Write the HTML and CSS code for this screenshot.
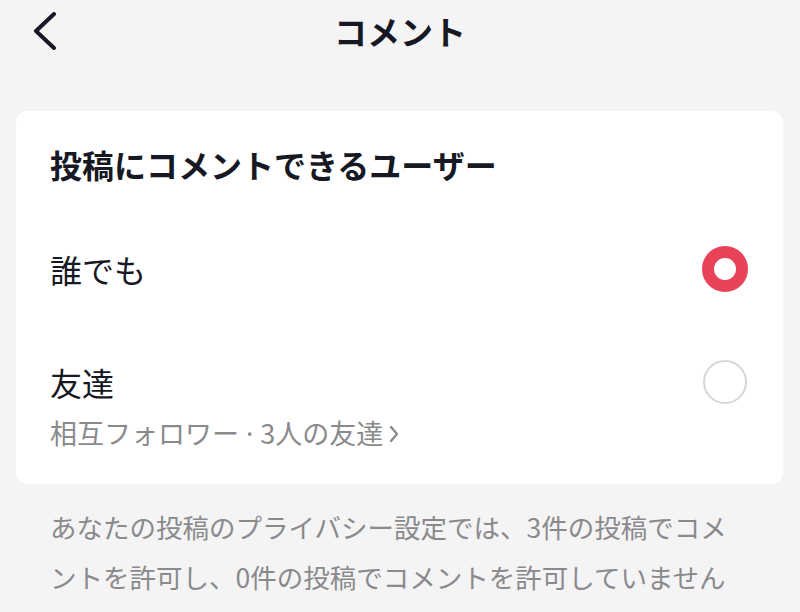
FILE: index.html
```html
<!DOCTYPE html>
<html lang="ja">
  <head>
    <meta charset="UTF-8" />
    <meta name="viewport" content="width=device-width, initial-scale=1.0" />
    <title>コメント</title>
    <link rel="stylesheet" href="styles.css">
  </head>
  <body>
    <header class="top-bar">
      <a href="#" class="back-button" aria-label="戻る">
        <svg width="24" height="38" viewBox="0 0 24 38">
          <polyline points="21,2 3,19 21,36" fill="none" stroke="#161823" stroke-width="4" stroke-linecap="round" stroke-linejoin="round" />
        </svg>
      </a>
      <h1 class="page-title">コメント</h1>
      <span></span>
    </header>

    <section class="card">
      <h2 class="card-title">投稿にコメントできるユーザー</h2>

      <!-- 선택 항목 -->
      <label class="option option-first">
        <span class="option-label">誰でも</span>
        <span class="radio radio-on"></span>
      </label>

      <label class="option option-second">
        <span class="option-label">友達</span>
        <span class="radio"></span>
      </label>
      <a href="#" class="option-sub">
        <span>相互フォロワー<span class="dot"> · </span>3人の友達</span>
        <svg width="12" height="20" viewBox="0 0 12 20">
          <polyline points="3,3 9,10 3,17" fill="none" stroke="#8a8a8d" stroke-width="2.4" stroke-linecap="round" stroke-linejoin="round" />
        </svg>
      </a>
    </section>

    <p class="note">
      あなたの投稿のプライバシー設定では、3件の投稿でコメントを許可し、0件の投稿でコメントを許可していません
    </p>
  </body>
</html>
```

FILE: styles.css
```css
* {
  margin: 0;
  padding: 0;
  box-sizing: border-box;
}

body {
  font-family: "Noto Sans CJK JP", "Noto Sans", sans-serif;
  background-color: #f4f4f4;
  color: #161823;
  height: 100vh;
  overflow: hidden;
}

/* 상단 바 */
.top-bar {
  display: grid;
  grid-template-columns: 1fr auto 1fr;
  align-items: center;
  height: 62px;
  padding: 0 33px;
}

.back-button {
  display: flex;
  align-items: center;
}

.page-title {
  font-size: 33px;
  font-weight: 700;
  line-height: 1;
}

/* 카드 */
.card {
  background-color: #fff;
  border-radius: 12px;
  margin: 49px 17px 0 16px;
  padding: 31px 35px 35px 34px;
}

.card-title {
  font-size: 32px;
  font-weight: 700;
  line-height: 44px;
}

.option {
  display: flex;
  align-items: center;
  justify-content: space-between;
  cursor: pointer;
}

.option-first {
  height: 86px;
  margin-top: 40px;
}

.option-second {
  height: 46px;
  margin-top: 47px;
}

.option-label {
  font-size: 32px;
  line-height: 46px;
}

.radio {
  width: 44px;
  height: 44px;
  border-radius: 50%;
  border: 2px solid #d6d6d6;
  margin-right: 1px;
}

.radio-on {
  width: 46px;
  height: 46px;
  border: 12px solid #e9435a;
  margin-right: 0;
}

.option-sub {
  display: flex;
  align-items: center;
  gap: 5px;
  margin-top: 13px;
  font-size: 27px;
  line-height: 30px;
  color: #8a8a8d;
  text-decoration: none;
}

.dot {
  font-family: "Noto Sans", sans-serif;
  white-space: pre;
}

/* 하단 안내 */
.note {
  margin-top: 18px;
  padding: 0 55px 0 50px;
  font-size: 26.5px;
  line-height: 50px;
  color: #8a8a8d;
}
```
